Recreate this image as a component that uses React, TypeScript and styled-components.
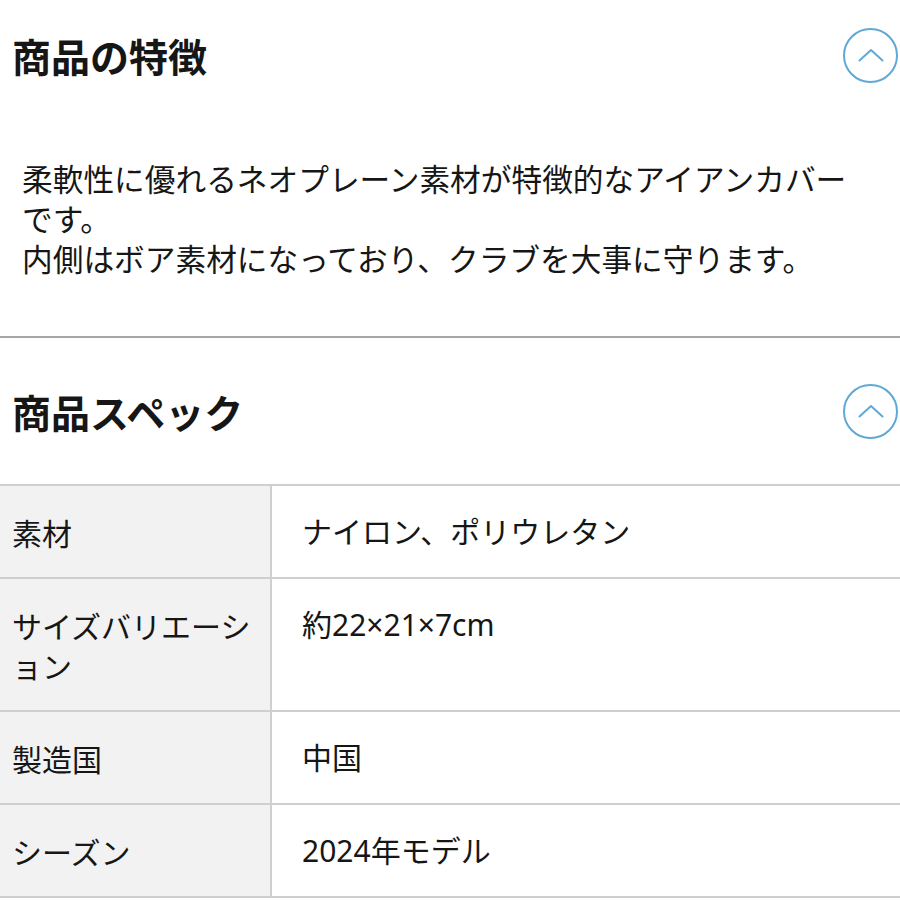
import React from 'react'
import styled, { createGlobalStyle } from 'styled-components'

const GlobalStyle = createGlobalStyle`
	html, body {
		margin: 0;
		padding: 0;
		background: #fff;
	}
	body {
		font-family: "Noto Sans CJK JP", "Noto Sans", sans-serif;
		color: #161616;
	}
`

const Page = styled.div`
	width: 900px;
	overflow: hidden;
`

const Section = styled.section<{ $divided?: boolean }>`
	border-bottom: ${(p) => (p.$divided ? '2px solid #a6a6a6' : 'none')};
`

const SectionHeader = styled.div<{ $height: number }>`
	display: flex;
	align-items: center;
	justify-content: space-between;
	height: ${(p) => p.$height}px;
	padding-left: 12px;
	padding-right: 2px;
`

const Title = styled.h2`
	margin: 0;
	font-size: 39px;
	font-weight: 700;
	line-height: 1;
`

const ToggleButton = styled.button`
	width: 55px;
	height: 55px;
	padding: 0;
	border: 2px solid #5ea9d8;
	border-radius: 50%;
	background: #fff;
	display: flex;
	align-items: center;
	justify-content: center;
	cursor: pointer;
`

const Description = styled.p`
	margin: 0;
	padding: 48px 40px 58px 22px;
	font-size: 30.7px;
	line-height: 40px;
`

const SpecList = styled.div`
	border-top: 2px solid #cfcfcf;
`

const SpecRow = styled.div`
	display: grid;
	grid-template-columns: 272px 1fr;
	border-bottom: 2px solid #cfcfcf;
`

const SpecLabel = styled.div`
	padding: 26px 12px 25px;
	background: #f2f2f2;
	border-right: 2px solid #cfcfcf;
	font-size: 30px;
	line-height: 40px;
`

// latin first so digits and the multiply sign stay narrow, like the original
const SpecValue = styled.div`
	padding: 26px 30px 25px;
	font-family: "Noto Sans", "Noto Sans CJK JP", sans-serif;
	font-size: 30px;
	line-height: 40px;
`

const ChevronUp = () => (
	<svg width="26" height="14" viewBox="0 0 26 14" fill="none">
		<path d="M1.5 12.5 L13 2 L24.5 12.5" stroke="#5ea9d8" strokeWidth="2" strokeLinecap="round" strokeLinejoin="round" />
	</svg>
)

// text kept as escapes so the file stays plain ascii
const TEXT = {
	features: '\u5546\u54C1\u306E\u7279\u5FB4',
	spec: '\u5546\u54C1\u30B9\u30DA\u30C3\u30AF',
	close: '\u9589\u3058\u308B',
	line1:
		'\u67D4\u8EDF\u6027\u306B\u512A\u308C\u308B\u30CD\u30AA\u30D7\u30EC\u30FC\u30F3\u7D20\u6750\u304C\u7279\u5FB4\u7684\u306A\u30A2\u30A4\u30A2\u30F3\u30AB\u30D0\u30FC\u3067\u3059\u3002',
	line2:
		'\u5185\u5074\u306F\u30DC\u30A2\u7D20\u6750\u306B\u306A\u3063\u3066\u304A\u308A\u3001\u30AF\u30E9\u30D6\u3092\u5927\u4E8B\u306B\u5B88\u308A\u307E\u3059\u3002',
}

const specs = [
	{ label: '\u7D20\u6750', value: '\u30CA\u30A4\u30ED\u30F3\u3001\u30DD\u30EA\u30A6\u30EC\u30BF\u30F3' },
	{
		label: '\u30B5\u30A4\u30BA\u30D0\u30EA\u30A8\u30FC\u30B7\u30E7\u30F3',
		value: '\u7D0422\u00D721\u00D77cm',
	},
	{ label: '\u88FD\u9020\u56FD', value: '\u4E2D\u56FD' },
	{ label: '\u30B7\u30FC\u30BA\u30F3', value: '2024\u5E74\u30E2\u30C7\u30EB' },
]

export default function App() {
	return (
		<Page>
			<GlobalStyle />
			<Section $divided>
				<SectionHeader $height={110}>
					<Title>{TEXT.features}</Title>
					<ToggleButton aria-label={TEXT.close}>
						<ChevronUp />
					</ToggleButton>
				</SectionHeader>
				<Description>
					{TEXT.line1}
					<br />
					{TEXT.line2}
				</Description>
			</Section>
			<Section>
				<SectionHeader $height={146}>
					<Title>{TEXT.spec}</Title>
					<ToggleButton aria-label={TEXT.close}>
						<ChevronUp />
					</ToggleButton>
				</SectionHeader>
				<SpecList>
					{specs.map((s) => (
						<SpecRow key={s.label}>
							<SpecLabel>{s.label}</SpecLabel>
							<SpecValue>{s.value}</SpecValue>
						</SpecRow>
					))}
				</SpecList>
			</Section>
		</Page>
	)
}
